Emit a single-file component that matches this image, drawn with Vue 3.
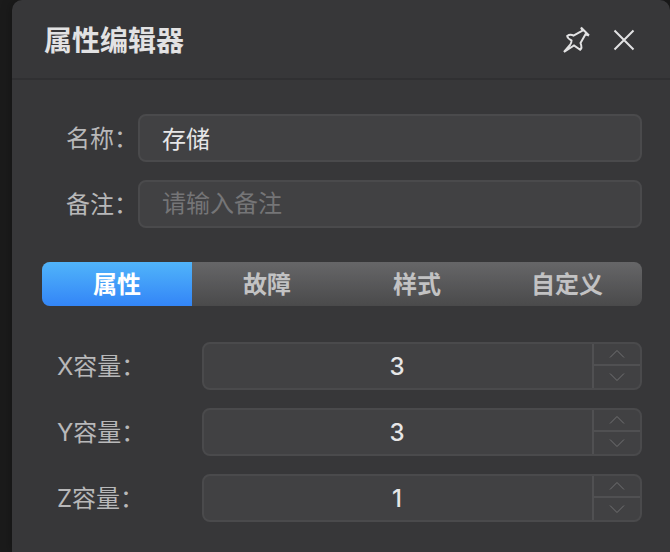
<template>
  <section class="panel">
    <header class="panel-header">
      <h1>属性编辑器</h1>
      <div class="actions">
        <button type="button" aria-label="固定" :aria-pressed="pinned" @click="pinned = !pinned">
          <svg width="28" height="28" viewBox="0 0 28 28">
            <path
              d="M19 1.5 L20.5 4.5 L11.5 9.5 Q8 7.8 5.2 10 Q5.5 12.5 9.5 14.5 Q9.5 17 8 19 L2 26 L12 19.5 L18.2 23.8 Q20.5 22 18.5 17 L23.5 8.2 L27 9.5 M19 1.5 L27 9.5"
            />
          </svg>
        </button>
        <button type="button" aria-label="关闭">
          <svg width="28" height="28" viewBox="0 0 28 28">
            <path d="M4.5 4.5 L23.5 23.5 M23.5 4.5 L4.5 23.5" />
          </svg>
        </button>
      </div>
    </header>

    <form class="panel-body" @submit.prevent>
      <div class="basic">
        <div class="row">
          <label for="name">名称：</label>
          <input id="name" v-model="name" class="box" type="text" />
        </div>
        <div class="row">
          <label for="remark">备注：</label>
          <input id="remark" v-model="remark" class="box" type="text" placeholder="请输入备注" />
        </div>
      </div>

      <div class="tabs" role="tablist">
        <button
          v-for="tab in tabs"
          :key="tab"
          type="button"
          role="tab"
          :aria-selected="tab === active"
          :class="{ active: tab === active }"
          @click="active = tab"
        >
          {{ tab }}
        </button>
      </div>

      <div class="capacity">
        <div v-for="item in capacity" :key="item.key" class="row">
          <label :for="item.key">{{ item.label }}：</label>
          <div class="box number">
            <input :id="item.key" v-model.number="item.value" type="text" inputmode="numeric" />
            <div class="steps">
              <button type="button" aria-label="增加" @click="item.value++">
                <svg width="16" height="10" viewBox="0 0 16 10"><path d="M1 8.5 L8 1.5 L15 8.5" /></svg>
              </button>
              <button type="button" aria-label="减少" @click="item.value--">
                <svg width="16" height="10" viewBox="0 0 16 10"><path d="M1 1.5 L8 8.5 L15 1.5" /></svg>
              </button>
            </div>
          </div>
        </div>
      </div>
    </form>
  </section>
</template>

<script setup>
import { ref } from 'vue'

const pinned = ref(false)
const name = ref('存储')
const remark = ref('')

const tabs = ['属性', '故障', '样式', '自定义']
const active = ref('属性')

const capacity = ref([
  { key: 'x', label: 'X容量', value: 3 },
  { key: 'y', label: 'Y容量', value: 3 },
  { key: 'z', label: 'Z容量', value: 1 },
])
</script>

<style>
body {
  background: #1b1b1b;
}
</style>

<style scoped>
.panel {
  box-sizing: border-box;
  min-height: 100vh;
  margin-left: 12px;
  border-radius: 10px 10px 0 0;
  background: #373739;
  color: #b8b8b9;
  font-family: Inter, 'Noto Sans CJK SC', sans-serif;
  font-size: 24px;
  box-shadow: 0 0 12px rgba(0, 0, 0, 0.3);
}
button,
input {
  margin: 0;
  padding: 0;
  border: none;
  background: none;
  color: inherit;
  font: inherit;
  outline: none;
}
button {
  cursor: pointer;
}
svg {
  display: block;
  fill: none;
  stroke: currentColor;
}
.panel-header {
  box-sizing: border-box;
  display: flex;
  align-items: center;
  justify-content: space-between;
  height: 80px;
  padding: 2px 32px 0;
  border-bottom: 2px solid #303032;
  color: #e2e2e3;
}
.panel-header h1 {
  margin: 0;
  padding-top: 2px;
  font-size: 28px;
  font-weight: 700;
  line-height: 40px;
}
.actions {
  display: flex;
  gap: 20px;
}
.actions svg {
  stroke-width: 2;
}
.panel-body {
  padding: 34px 28px 30px 30px;
}
.basic,
.capacity {
  display: flex;
  flex-direction: column;
  gap: 18px;
}
.row {
  display: flex;
  align-items: center;
}
.row label {
  flex: none;
  padding-top: 2px;
  line-height: 36px;
}
.basic label {
  width: 96px;
  text-align: right;
}
.capacity label {
  box-sizing: border-box;
  width: 160px;
  padding-left: 15px;
}
.box {
  flex: 1;
  box-sizing: border-box;
  min-width: 0;
  height: 48px;
  border: 2px solid #4a4a4c;
  border-radius: 8px;
  background: #414143;
  color: #e6e6e7;
}
input.box {
  padding: 0 22px 2px;
}
.box::placeholder {
  color: #757577;
  opacity: 1;
}
.tabs {
  display: flex;
  height: 44px;
  margin: 34px 0 36px;
  border-radius: 8px;
  overflow: hidden;
  background: linear-gradient(#666668, #4a4a4b);
}
.tabs button {
  flex: 1;
  padding-bottom: 4px;
  color: #c2c2c3;
  font-weight: 700;
}
.tabs button.active {
  background: linear-gradient(#50b4fa, #3385f7);
  color: #fff;
}
.number {
  display: flex;
  overflow: hidden;
}
.number input {
  flex: 1;
  min-width: 0;
  padding-right: 2px;
  font-weight: 500;
  text-align: center;
}
.steps {
  width: 46px;
  border-left: 2px solid #505052;
  color: #707072;
}
.steps button {
  box-sizing: border-box;
  display: flex;
  align-items: center;
  justify-content: center;
  width: 100%;
  height: 50%;
}
.steps button:first-child {
  border-bottom: 2px solid #505052;
}
</style>
